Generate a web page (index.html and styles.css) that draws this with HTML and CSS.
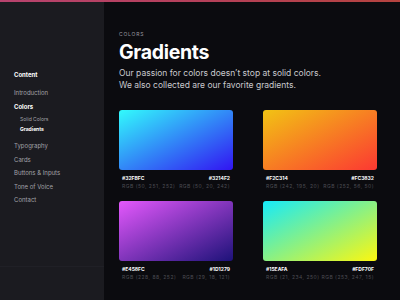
FILE: index.html
```
<!DOCTYPE html>
<html lang="en">
<head>
<meta charset="UTF-8">
<meta name="viewport" content="width=device-width, initial-scale=1.0">
<title>Gradients</title>
<link rel="stylesheet" href="styles.css">
</head>
<body>
    <div class="topline"></div>
    <div class="layout">
        <aside class="sidebar">
            <nav class="nav">
                <p class="nav-title">Content</p>
                <a class="nav-link">Introduction</a>
                <a class="nav-link active">Colors</a>
                <a class="nav-sub first">Solid Colors</a>
                <a class="nav-sub active">Gradients</a>
                <a class="nav-link spaced">Typography</a>
                <a class="nav-link">Cards</a>
                <a class="nav-link">Buttons &amp; Inputs</a>
                <a class="nav-link">Tone of Voice</a>
                <a class="nav-link">Contact</a>
            </nav>
            <div class="sidebar-foot"></div>
        </aside>

        <main class="content">
            <p class="eyebrow">COLORS</p>
            <h1>Gradients</h1>
            <p class="intro">Our passion for colors doesn’t stop at solid colors.<br>We also collected are our favorite gradients.</p>

            <section class="grid">
                <div class="swatch">
                    <div class="chip blue"></div>
                    <div class="meta">
                        <div><b>#32FBFC</b><span>RGB (50, 251, 252)</span></div>
                        <div class="right"><b>#3214F2</b><span>RGB (50, 20, 242)</span></div>
                    </div>
                </div>
                <div class="swatch">
                    <div class="chip orange"></div>
                    <div class="meta">
                        <div><b>#F2C314</b><span>RGB (242, 195, 20)</span></div>
                        <div class="right"><b>#FC3832</b><span>RGB (252, 56, 50)</span></div>
                    </div>
                </div>
                <div class="swatch">
                    <div class="chip purple"></div>
                    <div class="meta">
                        <div><b>#E458FC</b><span>RGB (228, 88, 252)</span></div>
                        <div class="right"><b>#1D1279</b><span>RGB (29, 18, 121)</span></div>
                    </div>
                </div>
                <div class="swatch">
                    <div class="chip lime"></div>
                    <div class="meta">
                        <div><b>#15EAFA</b><span>RGB (21, 234, 250)</span></div>
                        <div class="right"><b>#FDF70F</b><span>RGB (253, 247, 15)</span></div>
                    </div>
                </div>
            </section>
        </main>
    </div>
</body>
</html>
```

FILE: styles.css
```
* {
    box-sizing: border-box;
}

body {
    margin: 0;
    font-family: 'Inter', 'Lato', sans-serif;
    background: #0b0b0f;
    color: #fff;
    height: 300px;
    overflow: hidden;
}

.topline {
    height: 2px;
    background: linear-gradient(to right, #b8436e, #b5405a, #b5433f);
}

.layout {
    display: flex;
    height: 298px;
}

.sidebar {
    width: 104px;
    background: #1b1b20;
    display: flex;
    flex-direction: column;
    justify-content: space-between;
}

.nav {
    display: flex;
    flex-direction: column;
    padding: 68px 0 0 14px;
}

.nav-title {
    margin: 0 0 6px;
    font-size: 6px;
    line-height: 10px;
    font-weight: 700;
    color: #fff;
}

.nav-link {
    font-size: 6px;
    line-height: 13.5px;
    color: #a2a2a8;
}

.nav-link.active {
    color: #fff;
    font-weight: 700;
}

.nav-link.spaced {
    margin-top: 5px;
}

.nav-sub {
    font-size: 5px;
    line-height: 10px;
    color: #a2a2a8;
    padding-left: 6px;
}

.nav-sub.first {
    margin-top: 1px;
}

.nav-sub.active {
    color: #fff;
    font-weight: 700;
}

.sidebar-foot {
    height: 34px;
    border-top: 1px solid #202026;
}

.content {
    flex: 1;
    padding: 28px 0 0 15px;
}

.eyebrow {
    margin: 0;
    font-size: 5px;
    line-height: 8px;
    letter-spacing: 0.8px;
    color: #9a9aa0;
}

h1 {
    margin: 3px 0 4px;
    font-size: 19.5px;
    line-height: 22px;
    letter-spacing: -0.3px;
    font-weight: 700;
}

.intro {
    margin: 0;
    font-size: 8.5px;
    line-height: 12px;
    color: #c9c9ce;
}

.grid {
    display: grid;
    grid-template-columns: 114px 114px;
    column-gap: 30px;
    row-gap: 11px;
    margin-top: 19px;
}

.chip {
    height: 60px;
    border-radius: 3px;
}

.blue {
    background: linear-gradient(to bottom right, #32fbfc, #3214f2);
}

.orange {
    background: linear-gradient(to bottom right, #f2c314, #fc3832);
}

.purple {
    background: linear-gradient(to bottom right, #e458fc, #1d1279);
}

.lime {
    background: linear-gradient(to bottom right, #15eafa, #fdf70f);
}

.meta {
    display: flex;
    justify-content: space-between;
    margin-top: 4px;
    padding: 0 3px;
}

.meta div {
    display: flex;
    flex-direction: column;
}

.meta .right {
    align-items: flex-end;
}

.meta b {
    font-size: 5px;
    line-height: 8px;
    color: #fff;
}

.meta span {
    font-size: 5px;
    line-height: 8px;
    letter-spacing: 0.5px;
    color: #4c4c53;
}
```
